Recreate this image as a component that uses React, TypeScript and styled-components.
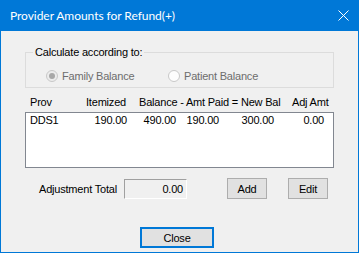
import React from 'react';
import styled, { createGlobalStyle } from 'styled-components';

const GlobalStyle = createGlobalStyle`
    html, body {
        margin: 0;
        padding: 0;
        background: #f0f0f0;
    }
    * {
        box-sizing: border-box;
    }
`;

const Window = styled.div`
    width: 359px;
    height: 253px;
    display: flex;
    flex-direction: column;
    background: #f0f0f0;
    border: 1px solid #0078d7;
    border-top: none;
    font-family: "Liberation Sans", Arial, sans-serif;
    font-size: 11px;
    letter-spacing: -0.2px;
    color: #000;
`;

const TitleBar = styled.div`
    height: 31px;
    flex: 0 0 31px;
    background: #0078d7;
    color: #fff;
    display: flex;
    align-items: center;
    justify-content: space-between;
    padding: 0 10px 1px 10px;
    margin: 0 -1px;
    font-family: Lato, "Noto Sans", sans-serif;
    font-size: 12px;
    letter-spacing: -0.05px;
`;

const Body = styled.div`
    flex: 1;
    display: flex;
    flex-direction: column;
    padding: 21px 24px 0 24px;
`;

const GroupBox = styled.div`
    position: relative;
    height: 36px;
    border: 1px solid #dcdcdc;
    display: flex;
    align-items: center;
    padding: 12px 0 0 20px;
`;

const GroupLegend = styled.span`
    position: absolute;
    top: -8px;
    left: 7px;
    padding: 0 2px;
    background: #f0f0f0;
    line-height: 14px;
`;

const RadioItem = styled.label<{ $width?: number }>`
    display: flex;
    align-items: center;
    gap: 4px;
    width: ${p => (p.$width ? `${p.$width}px` : 'auto')};
    color: #6d6d6d;
    line-height: 13px;
`;

const RadioCircle = styled.span<{ $checked?: boolean }>`
    width: 12px;
    height: 12px;
    border-radius: 50%;
    border: 1px solid #c8c8c8;
    background: ${p => (p.$checked ? '#ececec' : '#fdfdfd')};
    display: flex;
    align-items: center;
    justify-content: center;

    &::after {
        content: '';
        display: ${p => (p.$checked ? 'block' : 'none')};
        width: 6px;
        height: 6px;
        border-radius: 50%;
        background: #a8a8a8;
    }
`;

const HeaderRow = styled.div`
    display: grid;
    grid-template-columns: 56px 53px 153px auto;
    padding-left: 5px;
    margin-top: 8px;
    line-height: 13px;
    white-space: nowrap;
`;

const ListBox = styled.div`
    margin-top: 3px;
    height: 56px;
    border: 1px solid #828790;
    background: #fff;
    padding-top: 1px;
`;

const ListRow = styled.div`
    display: grid;
    grid-template-columns: 56px 41px 49px 43px 55px 50px;
    padding-left: 4px;
    line-height: 13px;
`;

const Cell = styled.span<{ $right?: boolean }>`
    text-align: ${p => (p.$right ? 'right' : 'left')};
`;

const BottomRow = styled.div`
    display: flex;
    align-items: center;
    margin-top: 10px;
    height: 21px;
    padding-left: 14px;
`;

const FieldLabel = styled.span`
    width: 80px;
    margin-right: 5px;
    white-space: nowrap;
`;

const ReadOnlyBox = styled.div`
    width: 63px;
    height: 20px;
    border-top: 1px solid #a0a0a0;
    border-left: 1px solid #a0a0a0;
    border-right: 1px solid #fff;
    border-bottom: 1px solid #fff;
    background: #f0f0f0;
    text-align: right;
    padding: 2px 3px 0 0;
    line-height: 14px;
`;

const Button = styled.button<{ $default?: boolean; $width?: number }>`
    width: ${p => p.$width || 40}px;
    height: 21px;
    background: #e1e1e1;
    border: ${p => (p.$default ? '2px solid #0078d7' : '1px solid #adadad')};
    font-family: "Liberation Sans", Arial, sans-serif;
    font-size: 11px;
    letter-spacing: -0.2px;
    color: #000;
    padding: 0;
    margin: 0;
`;

const ButtonGap = styled.div<{ $w: number }>`
    width: ${p => p.$w}px;
`;

const Footer = styled.div`
    margin-top: 28px;
    padding-left: 115px;
`;

const App: React.FC = () => {
    return (
        <>
            <GlobalStyle />
            <Window>
                <TitleBar>
                    <span>Provider Amounts for Refund(+)</span>
                    <svg width="11" height="11" viewBox="0 0 11 11">
                        <path d="M0.5 0.5 L10.5 10.5 M10.5 0.5 L0.5 10.5" stroke="#fff" strokeWidth="1" />
                    </svg>
                </TitleBar>
                <Body>
                    <GroupBox>
                        <GroupLegend>Calculate according to:</GroupLegend>
                        <RadioItem $width={122}>
                            <RadioCircle $checked />
                            Family Balance
                        </RadioItem>
                        <RadioItem>
                            <RadioCircle />
                            Patient Balance
                        </RadioItem>
                    </GroupBox>

                    <HeaderRow>
                        <span>Prov</span>
                        <span>Itemized</span>
                        <span>Balance - Amt Paid = New Bal</span>
                        <span>Adj Amt</span>
                    </HeaderRow>

                    <ListBox>
                        <ListRow>
                            <Cell>DDS1</Cell>
                            <Cell $right>190.00</Cell>
                            <Cell $right>490.00</Cell>
                            <Cell $right>190.00</Cell>
                            <Cell $right>300.00</Cell>
                            <Cell $right>0.00</Cell>
                        </ListRow>
                    </ListBox>

                    <BottomRow>
                        <FieldLabel>Adjustment Total</FieldLabel>
                        <ReadOnlyBox>0.00</ReadOnlyBox>
                        <ButtonGap $w={40} />
                        <Button>Add</Button>
                        <ButtonGap $w={21} />
                        <Button>Edit</Button>
                    </BottomRow>

                    <Footer>
                        <Button $default $width={74}>Close</Button>
                    </Footer>
                </Body>
            </Window>
        </>
    );
};

export default App;
